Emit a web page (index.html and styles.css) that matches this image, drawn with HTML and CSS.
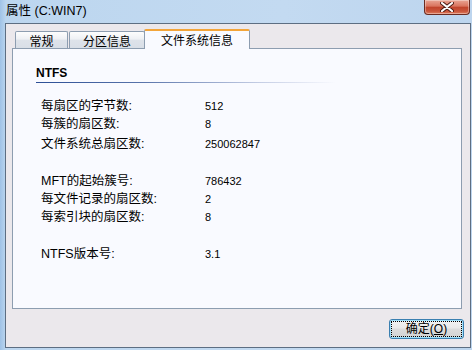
FILE: index.html
```html
<!doctype html>
<html lang="zh-CN">

<head>
  <meta charset="utf-8">
  <title>属性 (C:WIN7)</title>
  <link rel="stylesheet" href="styles.css">
</head>

<body>

  <div class="win">
    <header class="win-title">
      <span class="win-caption">属性 (C:WIN7)</span>
      <span class="win-close">
        <svg width="14" height="10" viewBox="0 0 14 10">
          <path d="M2 1 L12 9 M12 1 L2 9" stroke="#4a1a12" stroke-width="4" stroke-linecap="round"/>
          <path d="M2 1 L12 9 M12 1 L2 9" stroke="#fff" stroke-width="2.2" stroke-linecap="round"/>
        </svg>
      </span>
    </header>

    <div class="win-client">
      <ul class="tabs">
        <li class="tab tab-general">常规</li>
        <li class="tab tab-part">分区信息</li>
        <li class="tab tab-active">文件系统信息</li>
      </ul>

      <section class="panel">
        <h2 class="fs-name">NTFS</h2>
        <div class="fs-rule"></div>

        <div class="group group-first">
          <div class="row"><span class="label">每扇区的字节数:</span><span class="value">512</span></div>
          <div class="row"><span class="label">每簇的扇区数:</span><span class="value">8</span></div>
          <div class="row row-loose"><span class="label">文件系统总扇区数:</span><span class="value">250062847</span></div>
        </div>

        <div class="group">
          <div class="row"><span class="label">MFT的起始簇号:</span><span class="value">786432</span></div>
          <div class="row"><span class="label">每文件记录的扇区数:</span><span class="value">2</span></div>
          <div class="row"><span class="label">每索引块的扇区数:</span><span class="value">8</span></div>
        </div>

        <div class="group">
          <div class="row"><span class="label">NTFS版本号:</span><span class="value">3.1</span></div>
        </div>
      </section>

      <footer class="actions">
        <button class="btn btn-default"><span class="btn-focus">确定(<u>O</u>)</span></button>
      </footer>
    </div>
  </div>

</body>

</html>
```

FILE: styles.css
```css
:root {
  --frame: #5d6e82;
  --client: #ebe8ec;
  --panel: #f9faff;
  --panelBorder: #8d9db0;
  --text: #000;
}

html body {
  margin: 0;
  padding: 0;
}

body {
  font-family: "Liberation Sans", "Noto Sans CJK SC", sans-serif;
  font-size: 12px;
  color: var(--text);
}

.win {
  width: 472px;
  height: 350px;
  display: flex;
  flex-direction: column;
  background: linear-gradient(90deg, #9fc2e6 0, #bcd6ef 6px, #c3daf1 60%, #bdd5ee 100%);
}

.win-title {
  height: 23px;
  flex: none;
  display: flex;
  align-items: flex-start;
  justify-content: space-between;
}

.win-caption {
  margin: 4px 0 0 6px;
  font-size: 12.5px;
  line-height: 15px;
  color: #000;
}

.win-close {
  width: 44px;
  height: 14px;
  margin-right: 2px;
  display: flex;
  align-items: center;
  justify-content: center;
  border: 1px solid #6a2b21;
  border-top: none;
  border-radius: 0 0 4px 4px;
  background: linear-gradient(#e9a594 0, #d9735d 45%, #c0432b 50%, #c9553b 80%, #e07e5f 100%);
  box-shadow: inset 0 0 0 1px rgba(255, 255, 255, .35);
}

.win-client {
  height: 323px;
  flex: none;
  margin: 0 1px 0 5px;
  border: 1px solid var(--frame);
  background: var(--client);
  display: flex;
  flex-direction: column;
}

.tabs {
  list-style: none;
  margin: 0;
  padding: 5px 0 0 9px;
  display: flex;
  align-items: flex-end;
  height: 19px;
  flex: none;
  position: relative;
  z-index: 1;
}

.tab {
  box-sizing: border-box;
  height: 17px;
  display: flex;
  align-items: center;
  justify-content: center;
  border: 1px solid var(--panelBorder);
  border-bottom: none;
  border-radius: 2px 2px 0 0;
  background: linear-gradient(#fdfdfd 0, #eef0f4 45%, #dee3ea 50%, #d9dfe7 100%);
}

.tab-general {
  width: 53px;
  margin-right: 1px;
}

.tab-part {
  width: 76px;
}

.tab-active {
  width: 106px;
  height: 20px;
  margin-left: -1px;
  margin-bottom: -1px;
  padding-bottom: 1px;
  background: var(--panel);
  border-top: 2px solid #f3a53a;
}

.panel {
  box-sizing: border-box;
  height: 261px;
  flex: none;
  margin: 0 8px 0 6px;
  padding: 16px 0 0 23px;
  border: 1px solid var(--panelBorder);
  background: var(--panel);
}

.fs-name {
  margin: 0;
  font-size: 12px;
  line-height: 16px;
  font-weight: bold;
}

.fs-rule {
  height: 1px;
  width: 300px;
  margin-top: 1px;
  background: linear-gradient(90deg, #2c4f96 0, #5873aa 35%, rgba(120, 140, 190, .4) 75%, rgba(255, 255, 255, 0) 100%);
}

.group {
  margin-top: 19px;
  padding-left: 5px;
}

.group-first {
  margin-top: 14px;
}

.row {
  display: flex;
  height: 18px;
  line-height: 18px;
}

.row-loose {
  margin-top: 2px;
}

.label {
  width: 164px;
  font-size: 12.5px;
}

.value {
  font-size: 11px;
}

.actions {
  display: flex;
  justify-content: flex-end;
  padding: 10px 6px 0 0;
}

.btn {
  width: 75px;
  height: 20px;
  padding: 1px;
  font: inherit;
  color: #000;
  border: 1px solid #3a7fb0;
  border-radius: 3px;
  background: linear-gradient(#f4f4f4 0, #e9e9e9 45%, #dcdcdc 50%, #d3d3d3 100%);
  box-shadow: inset 0 0 0 1px #9fe0fb;
  display: flex;
}

.btn-focus {
  flex: 1;
  border: 1px dotted #000;
  line-height: 14px;
  text-align: center;
}
```
